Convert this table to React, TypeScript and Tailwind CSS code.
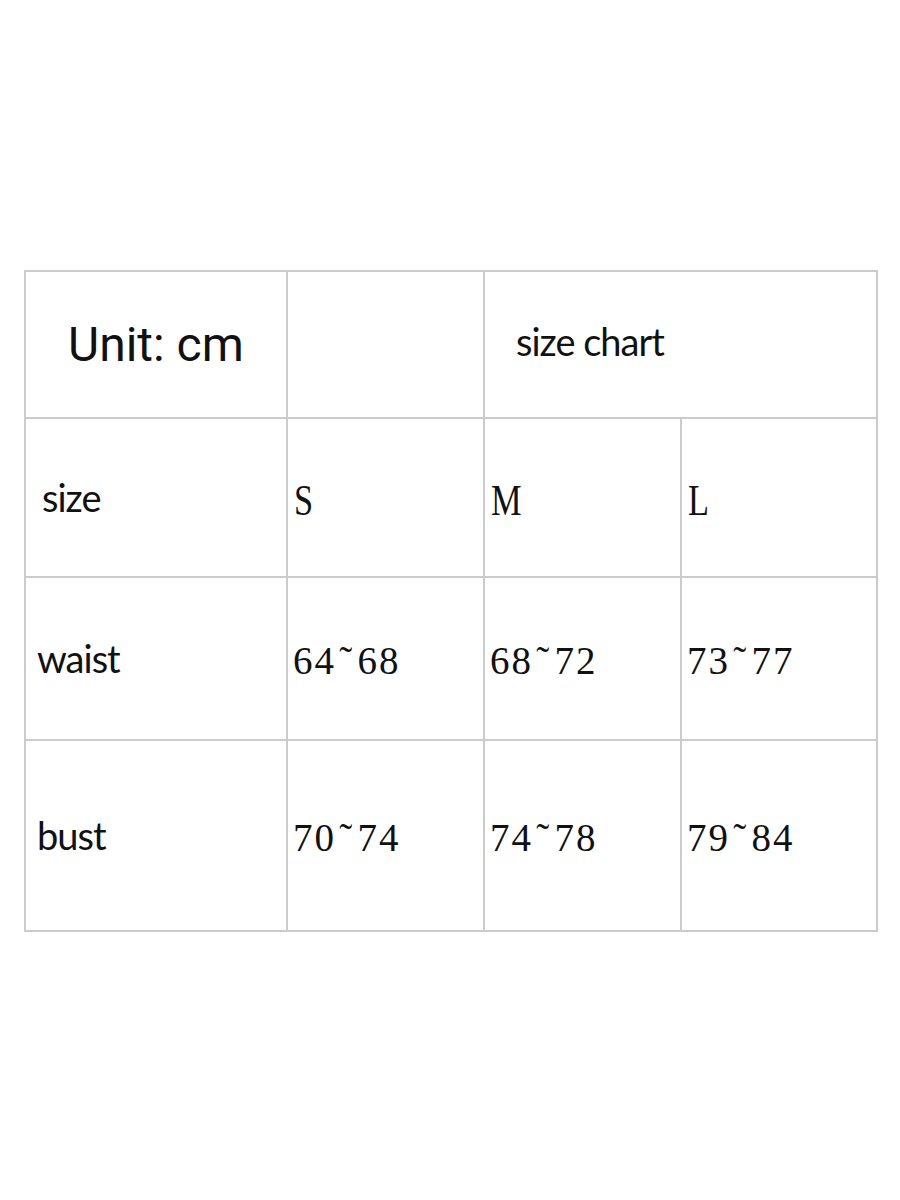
import React from 'react';

const label = "font-['Lato','Noto_Sans',sans-serif] text-[38px] tracking-[-1px] text-[#111]";
const serif = "font-['Liberation_Serif','Times_New_Roman',serif] text-[#111]";
const cell = 'flex items-center border-r-2 border-b-2 border-[#cbcbcb]';

const rows = [
  { name: 'waist', values: ['64˜68', '68˜72', '73˜77'], h: 'h-[163px]' },
  { name: 'bust', values: ['70˜74', '74˜78', '79˜84'], h: 'h-[191px]' },
];

function Mono({ text }: { text: string }) {
  return (
    <span className={`${serif} flex text-[39px] leading-none`}>
      {text.split('').map((ch, i) => (
        <span key={i} className="inline-block w-[21.5px] text-center">
          {ch}
        </span>
      ))}
    </span>
  );
}

export default function App() {
  return (
    <div className="min-h-[1200px] w-[900px] bg-white pt-[270px] pl-[24px]">
      <div className="grid w-max grid-cols-[262px_197px_197px_196px] border-l-2 border-t-2 border-[#cbcbcb]">
        {/* header row */}
        <div className={`${cell} h-[147px] pl-[42px]`}>
          <span className="font-['Roboto',sans-serif] text-[48px] leading-none text-[#111]">Unit: cm</span>
        </div>
        <div className={`${cell} h-[147px]`} />
        <div className={`${cell} col-span-2 h-[147px] pl-[31px]`}>
          <span className={`${label} -mt-[6px]`}>size chart</span>
        </div>

        {/* sizes */}
        <div className={`${cell} h-[159px] pl-[16px]`}>
          <span className={label}>size</span>
        </div>
        {['S', 'M', 'L'].map((s) => (
          <div key={s} className={`${cell} h-[159px] pl-[6px]`}>
            <span className={`${serif} mt-[6px] inline-block origin-left scale-x-[0.78] text-[44px] leading-none`}>{s}</span>
          </div>
        ))}

        {rows.map((r) => (
          <React.Fragment key={r.name}>
            <div className={`${cell} ${r.h} pl-[11px]`}>
              <span className={label}>{r.name}</span>
            </div>
            {r.values.map((v) => (
              <div key={v} className={`${cell} ${r.h} pl-[4px]`}>
                <div className="mt-[4px]">
                  <Mono text={v} />
                </div>
              </div>
            ))}
          </React.Fragment>
        ))}
      </div>
    </div>
  );
}
